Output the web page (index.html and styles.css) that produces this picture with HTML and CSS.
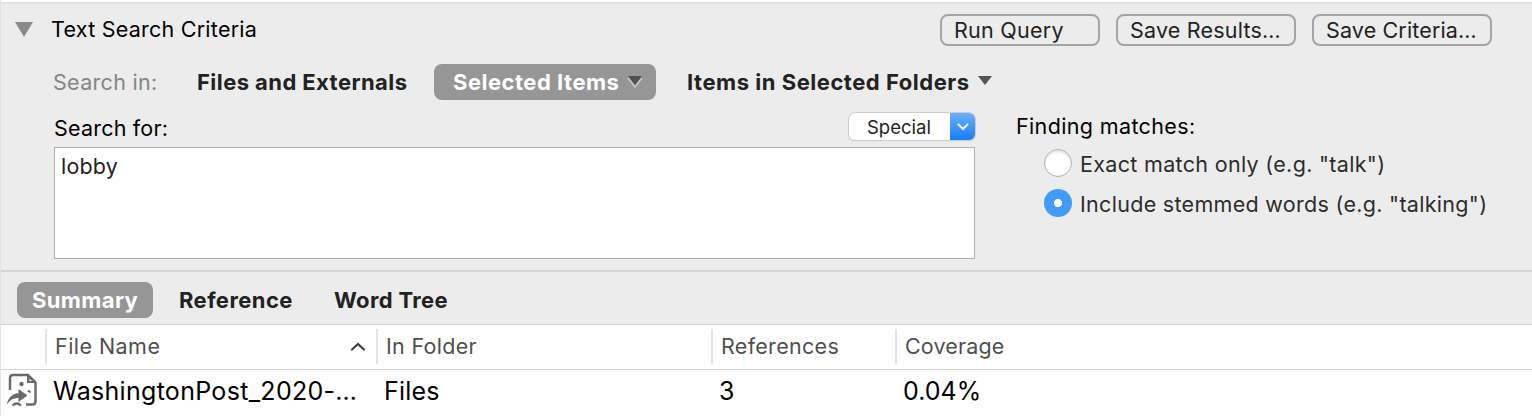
FILE: index.html
```html
<!DOCTYPE html>
<html lang="en">
<head>
<meta charset="utf-8">
<title>Text Search Criteria</title>
<link rel="stylesheet" href="styles.css">
</head>
<body>
<main class="window">
  <section class="criteria">
    <header class="title-row">
      <svg class="disclosure" width="18" height="15" viewBox="0 0 18 15"><path d="M0 0H18L9 15Z" fill="#8b8b8b"/></svg>
      <h1 class="title"><span class="t-title">Text Search Criteria</span></h1>
      <div class="actions">
        <button class="action run"><span class="t-run">Run Query</span></button>
        <button class="action"><span class="t-results">Save Results…</span></button>
        <button class="action"><span class="t-criteria">Save Criteria…</span></button>
      </div>
    </header>
    <nav class="scope-row">
      <span class="scope-label"><span class="t-in">Search in:</span></span>
      <span class="scope files"><span class="t-files">Files and Externals</span></span>
      <span class="scope selected"><span class="t-selected">Selected Items</span>
        <svg class="caret" width="16" height="12" viewBox="0 0 16 12"><path d="M1 2L8 11L15 2" fill="none" stroke="#c9c9c9" stroke-width="1.4"/><path d="M1 0H15L8 9Z" fill="#505050"/></svg>
      </span>
      <span class="scope folders"><span class="t-folders">Items in Selected Folders</span>
        <svg class="caret" width="16" height="12" viewBox="0 0 16 12"><path d="M1 0H15L8 9Z" fill="#555"/></svg>
      </span>
    </nav>
    <div class="form">
      <div class="query">
        <div class="query-head">
          <label class="query-label"><span class="t-for">Search for:</span></label>
          <div class="special">
            <span class="special-text"><span class="t-special">Special</span></span>
            <span class="special-arrow"><svg width="12" height="8" viewBox="0 0 12 8"><path d="M1.5 1.5L6 6L10.500 1.500" fill="none" stroke="#fff" stroke-width="2" stroke-linecap="round" stroke-linejoin="round"/></svg></span>
          </div>
        </div>
        <div class="query-input"><span class="t-lobby">lobby</span></div>
      </div>
      <div class="matches">
        <div class="matches-title"><span class="t-finding">Finding matches:</span></div>
        <div class="option"><i class="radio"></i><span class="t-exact">Exact match only (e.g. "talk")</span></div>
        <div class="option"><i class="radio checked"></i><span class="t-include">Include stemmed words (e.g. "talking")</span></div>
      </div>
    </div>
  </section>
  <nav class="tabs">
    <span class="tab active"><span class="t-summary">Summary</span></span>
    <span class="tab reference"><span class="t-reference">Reference</span></span>
    <span class="tab tree"><span class="t-tree">Word Tree</span></span>
  </nav>
  <div class="grid head">
    <div class="cell"></div>
    <div class="cell name"><span class="t-name">File Name</span>
      <svg width="16" height="10" viewBox="0 0 16 10"><path d="M2 7.500L8 2L14 7.500" fill="none" stroke="#414141" stroke-width="2.300" stroke-linecap="round"/></svg>
    </div>
    <div class="cell"><span class="t-folder">In Folder</span></div>
    <div class="cell"><span class="t-refs">References</span></div>
    <div class="cell"><span class="t-coverage">Coverage</span></div>
  </div>
  <div class="grid row">
    <div class="icon-cell">
      <svg width="32" height="34" viewBox="0 0 32 34" fill="none" stroke="#6b6b6b" stroke-width="2.500">
        <path d="M4 17V5Q4 2 7 2H22L29.500 9.500V28.500Q29.500 31.500 26.500 31.500H20"/>
        <path d="M21 1.500V10H30.500L22 1.500Z" fill="#6b6b6b" stroke="none"/>
        <path d="M23.500 5.500V8H26Z" fill="#fff" stroke="none"/>
        <circle cx="15.500" cy="11" r="2.200" fill="#6b6b6b" stroke="none"/>
        <path d="M22 17.500L24.500 19.500" stroke-width="2"/>
        <path d="M1 31.500C1.500 25.500 6 20.500 12.500 20.200V16L21.500 22.500L12.500 29V25C7.500 25 4 27 1 31.500Z" fill="#6b6b6b" stroke="none"/>
        <path d="M6.500 32.500Q10.500 28.500 15 32.500" stroke-width="2.200"/>
      </svg>
    </div>
    <div class="cell"><span class="t-post">WashingtonPost_2020-…</span></div>
    <div class="cell"><span class="t-value">Files</span></div>
    <div class="cell"><span class="t-three">3</span></div>
    <div class="cell"><span class="t-percent">0.04%</span></div>
  </div>
</main>
</body>
</html>
```
FILE: styles.css
```css
* { box-sizing: border-box; }
body { margin: 0; background: #fff; font-family: Inter, "Liberation Sans", sans-serif; font-size: 21.5px; color: #000; }
.window { width: 1532px; height: 416px; overflow: hidden; border-left: 1px solid #e3e3e3; white-space: nowrap; padding-top: 2px; }
svg { display: block; flex: none; }

.criteria { height: 270px; background: #ececec; border-top: 2px solid #e2e2e2; border-bottom: 2px solid #d4d4d4; }
.title-row { display: flex; height: 52px; padding: 0 40px 0 14px; align-items: center; }
.title { margin: 0 0 2px 18px; font-size: 21.5px; font-weight: 400; }
.disclosure { margin-top: -1px; }
.actions { display: flex; gap: 16px; margin-left: auto; }
.action { width: 180px; height: 32px; padding: 0 0 0 12px; border: 2px solid #a4a4a4; border-radius: 8px; background: none; font: inherit; color: #222; text-align: left; }
.action.run { width: 160px; }

.scope-row { display: flex; height: 52px; padding: 8px 0 8px 52px; }
.scope-label { width: 144px; line-height: 36px; color: #858585; }
.scope { display: flex; align-items: center; height: 36px; font-size: 22px; font-weight: 700; color: #222; }
.scope.files { width: 237px; }
.scope.selected { width: 222px; padding: 0 13px 0 19px; justify-content: space-between; border-radius: 8px; background: #969696; color: #fff; }
.scope.folders { width: 306px; margin-left: 31px; justify-content: space-between; }

.form { display: flex; padding: 4px 0 0 53px; }
.query { width: 921px; }
.query-head { display: flex; height: 35px; justify-content: space-between; }
.query-label { line-height: 32px; }
.special { display: flex; width: 126px; height: 27px; margin-top: 1px; border-radius: 6px; background: #fff; box-shadow: 0 0 0 1px #cdcdcd, 0 1px 1px #bdbdbd; overflow: hidden; }
.special-text { width: 101px; padding-left: 18px; line-height: 28px; font-size: 18.500px; color: #222; }
.special-arrow { display: flex; width: 25px; align-items: center; justify-content: center; background: linear-gradient(#6bb1fa, #157dfb); }
.query-input { height: 112px; padding: 2px 6px; border: 1px solid #b0b0b0; background: #fff; line-height: 32px; color: #222; }
.matches { margin-left: 41px; }
.matches-title { height: 32px; line-height: 29px; }
.option { display: flex; height: 40px; padding-left: 28px; gap: 8px; align-items: center; color: #2c2c2c; line-height: 42px; }
.radio { width: 28px; height: 28px; border: 1px solid #b2b2b2; border-radius: 50%; background: #fff; box-shadow: inset 0 2px 2px #e2e2e2; margin-top: -3px; }
.radio.checked { border: 0; background: radial-gradient(circle, #fff 3.600px, #409bf9 4.500px); box-shadow: none; }

.tabs { display: flex; height: 53px; padding: 10px 0 0 16px; background: #ececec; border-bottom: 1px solid #d2d2d2; }
.tab { height: 36px; line-height: 36px; font-size: 22px; font-weight: 700; color: #222; }
.tab.active { width: 136px; padding-left: 15px; border-radius: 8px; background: #969696; color: #fff; }
.tab.reference { width: 155px; margin-left: 26px; }

.grid { display: grid; grid-template-columns: 44px 331px 335px 184px 1fr; }
.head { height: 45px; padding: 4px 0 5px; border-bottom: 1px solid #d2d2d2; color: #4f4f4f; line-height: 35px; }
.head .cell + .cell { height: 35px; border-left: 2px solid #e3e3e3; padding-left: 8px; }
.head .cell.name { display: flex; justify-content: space-between; align-items: flex-start; padding-right: 10px; }
.head .cell.name svg { margin-top: 13px; }
.row { height: 46px; line-height: 43px; font-size: 25px; }
.row .cell { padding-left: 8px; }
.icon-cell { padding: 3px 0 0 5px; }

/* Per-label tracking */
.t-title { letter-spacing: .24px; }
.t-run { letter-spacing: .25px; }
.t-results, .t-for, .t-lobby { letter-spacing: .2px; }
.t-in { letter-spacing: .3px; }
.t-criteria { letter-spacing: .14px; }
.t-files { letter-spacing: .43px; }
.t-selected { letter-spacing: .5px; }
.t-folders { letter-spacing: .53px; }
.t-finding { letter-spacing: .36px; }
.t-exact { letter-spacing: .32px; }
.t-include { letter-spacing: .3px; }
.t-summary { letter-spacing: .38px; }
.t-reference { letter-spacing: .43px; }
.t-tree { letter-spacing: .36px; }
.t-name { letter-spacing: .45px; }
.t-folder, .t-refs { letter-spacing: .3px; }
.t-coverage { letter-spacing: .14px; }
.t-post { letter-spacing: .3px; }
.t-value { letter-spacing: .2px; }
```
